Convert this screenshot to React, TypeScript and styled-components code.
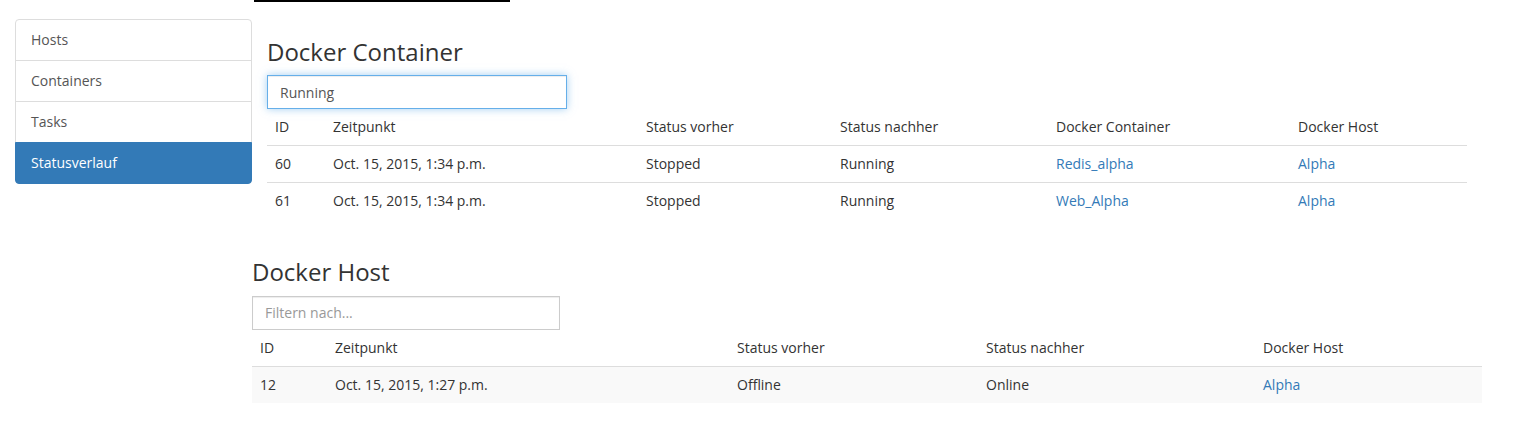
import React from 'react';
import styled, { createGlobalStyle } from 'styled-components';

const GlobalStyle = createGlobalStyle`
  * { box-sizing: border-box; }
  body {
    margin: 0;
    background: #fff;
    color: #333;
    font-family: "Open Sans", "Liberation Sans", sans-serif;
    font-size: 14px;
    line-height: 20px;
  }
`;

const TopRule = styled.div`
  margin-left: 254px;
  width: 256px;
  height: 2px;
  background: #000;
  margin-bottom: 17px;
`;

const Layout = styled.div`
  display: flex;
  align-items: flex-start;
  padding-left: 15px;
`;

const Sidebar = styled.nav`
  width: 237px;
  display: flex;
  flex-direction: column;
`;

const NavItem = styled.a<{ $active?: boolean }>`
  display: block;
  padding: 10px 15px;
  margin-bottom: -1px;
  border: 1px solid ${p => (p.$active ? '#337ab7' : '#ddd')};
  background: ${p => (p.$active ? '#337ab7' : '#fff')};
  color: ${p => (p.$active ? '#fff' : '#555')};
  text-decoration: none;
  position: relative;
  z-index: ${p => (p.$active ? 2 : 1)};

  &:first-child {
    border-top-left-radius: 4px;
    border-top-right-radius: 4px;
  }
  &:last-child {
    border-bottom-left-radius: 4px;
    border-bottom-right-radius: 4px;
    margin-bottom: 0;
  }
`;

const Main = styled.main`
  width: 1230px;
`;

const Section = styled.section<{ $inset?: boolean; $spaced?: boolean }>`
  padding: 0 ${p => (p.$inset ? 15 : 0)}px;
  margin-top: ${p => (p.$spaced ? 40 : 0)}px;
`;

const Heading = styled.h3`
  margin: 20px 0 10px;
  font-size: 24px;
  line-height: 26.4px;
  font-weight: 400;
  color: #333;
`;

const FilterInput = styled.input<{ $focused?: boolean }>`
  display: block;
  width: 25%;
  height: 34px;
  padding: 6px 12px;
  font-family: inherit;
  font-size: 14px;
  line-height: 20px;
  color: #555;
  background: #fff;
  border: 1px solid ${p => (p.$focused ? '#66afe9' : '#ccc')};
  border-radius: 0;
  box-shadow: ${p =>
    p.$focused
      ? 'inset 0 1px 1px rgba(0,0,0,.075), 0 0 8px rgba(102,175,233,.6)'
      : 'inset 0 1px 1px rgba(0,0,0,.075)'};
  outline: none;

  &::placeholder {
    color: #999;
  }
`;

const Table = styled.table`
  width: 100%;
  border-collapse: collapse;
  margin-bottom: 20px;
  table-layout: fixed;
`;

const Th = styled.th`
  padding: 8px;
  text-align: left;
  font-weight: 400;
  line-height: 20px;
  border-bottom: 1px solid #ddd;
`;

const Row = styled.tr<{ $striped?: boolean }>`
  background: ${p => (p.$striped ? '#f9f9f9' : 'transparent')};
`;

const Td = styled.td`
  padding: 8px;
  line-height: 20px;
  border-top: 1px solid #ddd;
  vertical-align: top;
`;

const Link = styled.a`
  color: #337ab7;
  text-decoration: none;
`;

const containerCols = [58, 313, 194, 216, 242, 177];
const hostCols = [75, 402, 249, 277, 227];

const containerRows = [
  { id: 60, time: 'Oct. 15, 2015, 1:34 p.m.', before: 'Stopped', after: 'Running', container: 'Redis_alpha', host: 'Alpha' },
  { id: 61, time: 'Oct. 15, 2015, 1:34 p.m.', before: 'Stopped', after: 'Running', container: 'Web_Alpha', host: 'Alpha' },
];

const hostRows = [
  { id: 12, time: 'Oct. 15, 2015, 1:27 p.m.', before: 'Offline', after: 'Online', host: 'Alpha' },
];

const navItems = ['Hosts', 'Containers', 'Tasks', 'Statusverlauf'];

export default function App() {
  return (
    <>
      <GlobalStyle />
      <TopRule />
      <Layout>
        <Sidebar>
          {navItems.map(item => (
            <NavItem key={item} href="#" $active={item === 'Statusverlauf'}>
              {item}
            </NavItem>
          ))}
        </Sidebar>
        <Main>
          <Section $inset>
            <Heading>Docker Container</Heading>
            <FilterInput $focused defaultValue="Running" placeholder="Filtern nach..." />
            <Table>
              <colgroup>
                {containerCols.map((w, i) => (
                  <col key={i} style={{ width: w }} />
                ))}
              </colgroup>
              <thead>
                <tr>
                  <Th>ID</Th>
                  <Th>Zeitpunkt</Th>
                  <Th>Status vorher</Th>
                  <Th>Status nachher</Th>
                  <Th>Docker Container</Th>
                  <Th>Docker Host</Th>
                </tr>
              </thead>
              <tbody>
                {containerRows.map(r => (
                  <Row key={r.id}>
                    <Td>{r.id}</Td>
                    <Td>{r.time}</Td>
                    <Td>{r.before}</Td>
                    <Td>{r.after}</Td>
                    <Td><Link href="#">{r.container}</Link></Td>
                    <Td><Link href="#">{r.host}</Link></Td>
                  </Row>
                ))}
              </tbody>
            </Table>
          </Section>
          <Section $spaced>
            <Heading>Docker Host</Heading>
            <FilterInput placeholder="Filtern nach..." />
            <Table>
              <colgroup>
                {hostCols.map((w, i) => (
                  <col key={i} style={{ width: w }} />
                ))}
              </colgroup>
              <thead>
                <tr>
                  <Th>ID</Th>
                  <Th>Zeitpunkt</Th>
                  <Th>Status vorher</Th>
                  <Th>Status nachher</Th>
                  <Th>Docker Host</Th>
                </tr>
              </thead>
              <tbody>
                {hostRows.map((r, i) => (
                  <Row key={r.id} $striped={i % 2 === 0}>
                    <Td>{r.id}</Td>
                    <Td>{r.time}</Td>
                    <Td>{r.before}</Td>
                    <Td>{r.after}</Td>
                    <Td><Link href="#">{r.host}</Link></Td>
                  </Row>
                ))}
              </tbody>
            </Table>
          </Section>
        </Main>
      </Layout>
    </>
  );
}
